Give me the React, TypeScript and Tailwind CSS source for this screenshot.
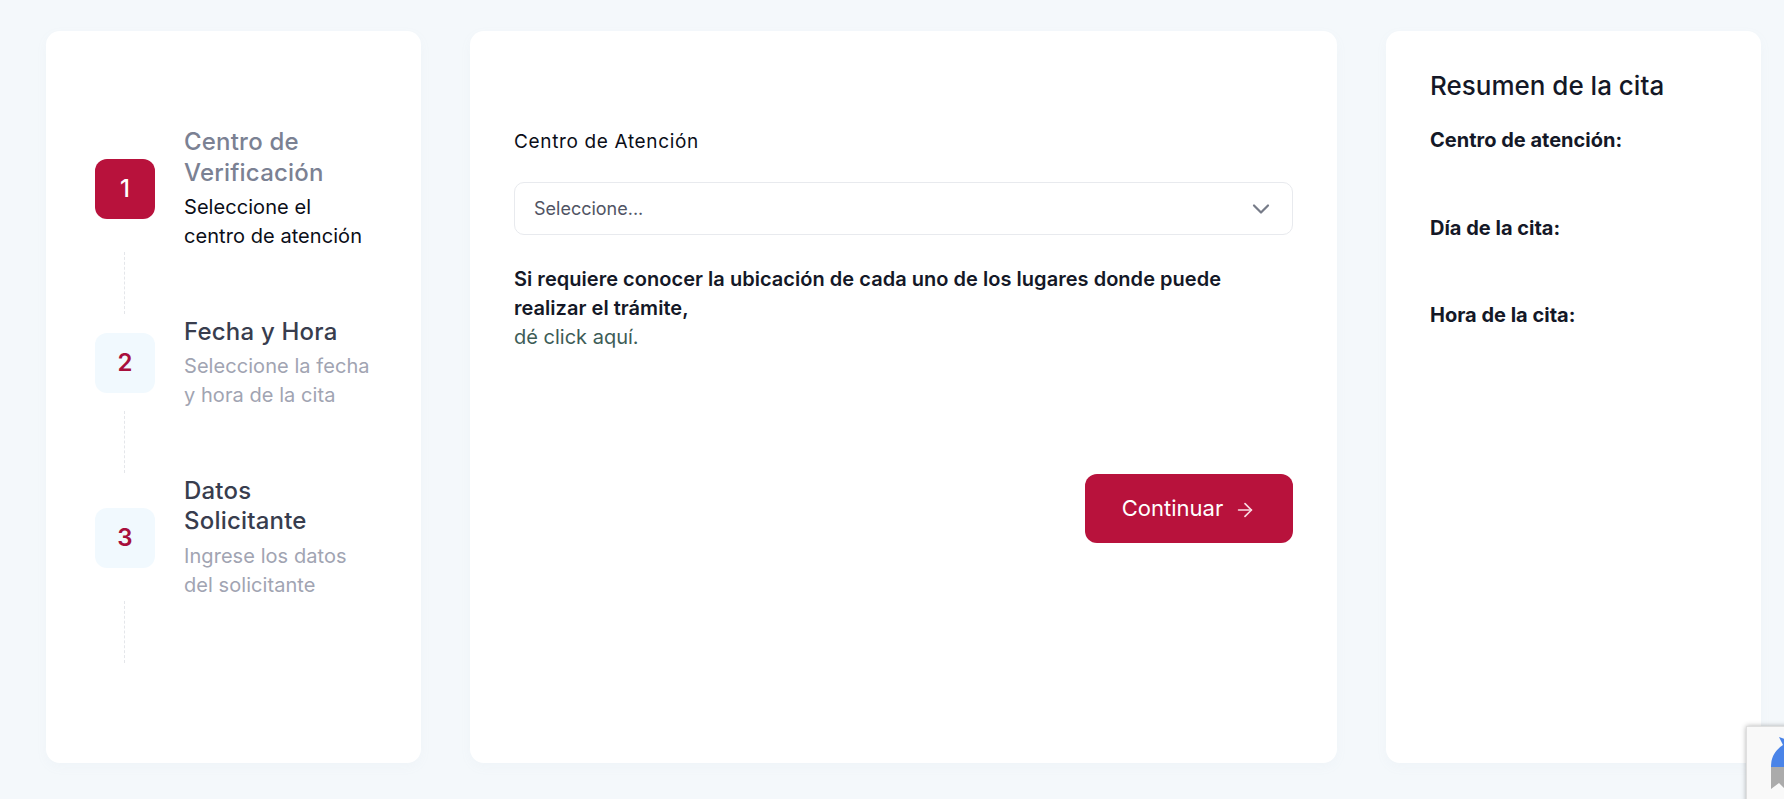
import React from 'react';
import { ChevronDown, ArrowRight } from 'lucide-react';

interface Step {
  n: number;
  title: string;
  desc: string;
  active?: boolean;
}

const steps: Step[] = [
  { n: 1, title: 'Centro de Verificación', desc: 'Seleccione el centro de atención', active: true },
  { n: 2, title: 'Fecha y Hora', desc: 'Seleccione la fecha y hora de la cita' },
  { n: 3, title: 'Datos Solicitante', desc: 'Ingrese los datos del solicitante' },
];

function StepItem({ step }: { step: Step }) {
  return (
    <div>
      <div className="flex items-center gap-[29px]">
        <div
          className={`w-[60px] h-[60px] shrink-0 rounded-[12px] flex items-center justify-center text-[24px]
            ${step.active ? 'bg-[#b8123c] text-white font-medium' : 'bg-[#f1f9fe] text-[#a80f3c] font-semibold'}`}
        >
          {step.n}
        </div>
        <div className="w-[190px]">
          <h3 className={`text-[24px] leading-[30.5px] tracking-[0.2px] font-medium ${step.active ? 'text-[#7b8193]' : 'text-[#383d4e]'}`}>
            {step.title}
          </h3>
          <p className={`mt-[5px] text-[20px] leading-[29px] tracking-[0.06px] ${step.active ? 'text-[#0b0e18]' : 'text-[#a1a4b2]'}`}>
            {step.desc}
          </p>
        </div>
      </div>
      {/* Dashed connector */}
      <div className="ml-[29px] mt-[1px] mb-[2.5px] h-[62px] border-l border-dashed border-[#e4e6ea]" />
    </div>
  );
}

function RecaptchaBadge() {
  return (
    <div className="absolute left-[1746px] top-[726px] w-[60px] h-[90px] bg-[#f9f9f9] border border-[#dfdfdf] shadow-[0_0_5px_rgba(0,0,0,0.3)]">
      <svg width="40" height="54" viewBox="0 0 40 54" className="ml-[24px] mt-[10px]">
        <path d="M8 0 L20 4 L34 4 L34 30 L0 30 C0 18 6 12 12 8 Z" fill="#4a84e8" />
        <path d="M0 30 L34 30 L34 52 L22 46 L14 52 L8 46 L0 52 Z" fill="#ababab" />
      </svg>
    </div>
  );
}

export default function App() {
  return (
    <div className="relative h-[799px] overflow-hidden bg-[#f4f8fb] font-['Inter',sans-serif]">
      <div className="flex gap-[49px] pt-[31px] pl-[46px] pr-[23px]">
        {/* Steps */}
        <aside className="w-[375px] h-[732px] shrink-0 rounded-[14px] bg-white pt-[96px] pl-[49px] shadow-[0_4px_12px_rgba(160,170,190,0.05)]">
          {steps.map(s => (
            <StepItem key={s.n} step={s} />
          ))}
        </aside>

        {/* Form */}
        <main className="flex-1 h-[732px] rounded-[14px] bg-white pt-[96px] px-[44px] shadow-[0_4px_12px_rgba(160,170,190,0.05)]">
          <label className="block text-[19px] leading-[29px] tracking-[0.65px] text-[#0b0e18]">Centro de Atención</label>
          <div className="mt-[26px] h-[53px] rounded-[10px] border border-[#e8eaee] flex items-center justify-between pl-[19px] pr-[17px]">
            <span className="text-[18px] text-[#505464]">Seleccione...</span>
            <ChevronDown size={28} strokeWidth={1.9} className="text-[#767b88]" />
          </div>
          <p className="mt-[30px] text-[20px] leading-[29px] tracking-[0.03px] font-semibold text-[#141827]">
            Si requiere conocer la ubicación de cada uno de los lugares donde puede realizar el trámite,
          </p>
          <a className="block text-[20px] leading-[29px] text-[#3d5c56]">dé click aquí.</a>
          <div className="mt-[122px] flex justify-end">
            <button className="w-[208px] h-[69px] rounded-[12px] bg-[#b8123c] text-white text-[22px] flex items-center justify-center gap-[11px]">
              Continuar
              <ArrowRight size={22} strokeWidth={1.8} className="text-[#f9dbe2] mt-[2px]" />
            </button>
          </div>
        </main>

        {/* Summary */}
        <aside className="w-[375px] h-[732px] shrink-0 rounded-[14px] bg-white pt-[38px] pl-[44px] shadow-[0_4px_12px_rgba(160,170,190,0.05)]">
          <h2 className="text-[26px] leading-[34px] font-medium text-[#141827]">Resumen de la cita</h2>
          <p className="mt-[23px] text-[20px] leading-[29px] font-bold text-[#141827]">Centro de atención:</p>
          <p className="mt-[58.5px] text-[20px] leading-[29px] font-bold text-[#141827]">Día de la cita:</p>
          <p className="mt-[58.5px] text-[20px] leading-[29px] font-bold text-[#141827]">Hora de la cita:</p>
        </aside>
      </div>
      <RecaptchaBadge />
    </div>
  );
}
